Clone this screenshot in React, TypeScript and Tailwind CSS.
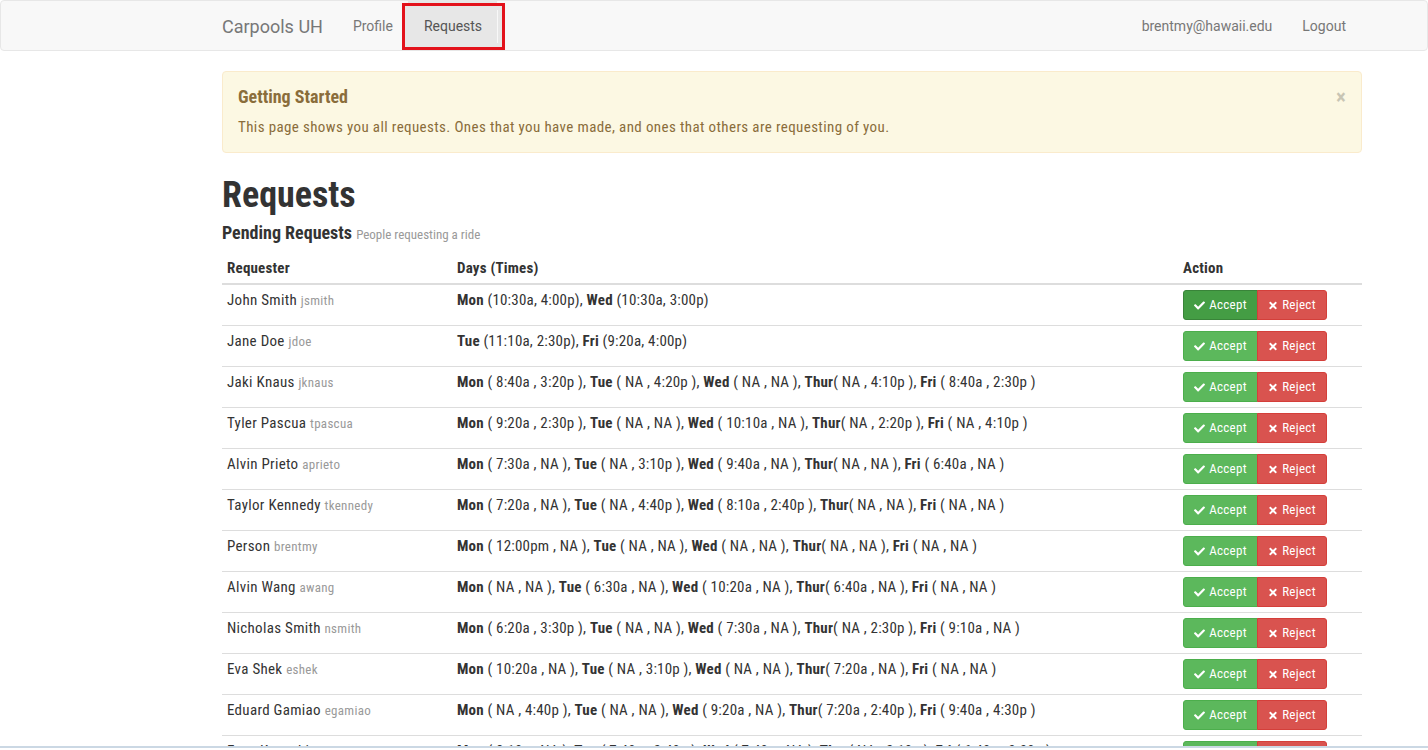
import React from "react";
import { FaCheck, FaTimes } from "react-icons/fa";

const cond = { fontFamily: '"Roboto Condensed", "Liberation Sans Narrow", Roboto, sans-serif' };
const rob = { fontFamily: 'Roboto, "Liberation Sans", sans-serif' };

type Req = { name: string; user: string; days: [string, string][] };

const rows: Req[] = [
  { name: "John Smith", user: "jsmith", days: [["Mon", " (10:30a, 4:00p), "], ["Wed", " (10:30a, 3:00p)"]] },
  { name: "Jane Doe", user: "jdoe", days: [["Tue", " (11:10a, 2:30p), "], ["Fri", " (9:20a, 4:00p)"]] },
  {
    name: "Jaki Knaus",
    user: "jknaus",
    days: [["Mon", " ( 8:40a , 3:20p ), "], ["Tue", " ( NA , 4:20p ), "], ["Wed", " ( NA , NA ), "], ["Thur", "( NA , 4:10p ), "], ["Fri", " ( 8:40a , 2:30p )"]],
  },
  {
    name: "Tyler Pascua",
    user: "tpascua",
    days: [["Mon", " ( 9:20a , 2:30p ), "], ["Tue", " ( NA , NA ), "], ["Wed", " ( 10:10a , NA ), "], ["Thur", "( NA , 2:20p ), "], ["Fri", " ( NA , 4:10p )"]],
  },
  {
    name: "Alvin Prieto",
    user: "aprieto",
    days: [["Mon", " ( 7:30a , NA ), "], ["Tue", " ( NA , 3:10p ), "], ["Wed", " ( 9:40a , NA ), "], ["Thur", "( NA , NA ), "], ["Fri", " ( 6:40a , NA )"]],
  },
  {
    name: "Taylor Kennedy",
    user: "tkennedy",
    days: [["Mon", " ( 7:20a , NA ), "], ["Tue", " ( NA , 4:40p ), "], ["Wed", " ( 8:10a , 2:40p ), "], ["Thur", "( NA , NA ), "], ["Fri", " ( NA , NA )"]],
  },
  {
    name: "Person",
    user: "brentmy",
    days: [["Mon", " ( 12:00pm , NA ), "], ["Tue", " ( NA , NA ), "], ["Wed", " ( NA , NA ), "], ["Thur", "( NA , NA ), "], ["Fri", " ( NA , NA )"]],
  },
  {
    name: "Alvin Wang",
    user: "awang",
    days: [["Mon", " ( NA , NA ), "], ["Tue", " ( 6:30a , NA ), "], ["Wed", " ( 10:20a , NA ), "], ["Thur", "( 6:40a , NA ), "], ["Fri", " ( NA , NA )"]],
  },
  {
    name: "Nicholas Smith",
    user: "nsmith",
    days: [["Mon", " ( 6:20a , 3:30p ), "], ["Tue", " ( NA , NA ), "], ["Wed", " ( 7:30a , NA ), "], ["Thur", "( NA , 2:30p ), "], ["Fri", " ( 9:10a , NA )"]],
  },
  {
    name: "Eva Shek",
    user: "eshek",
    days: [["Mon", " ( 10:20a , NA ), "], ["Tue", " ( NA , 3:10p ), "], ["Wed", " ( NA , NA ), "], ["Thur", "( 7:20a , NA ), "], ["Fri", " ( NA , NA )"]],
  },
  {
    name: "Eduard Gamiao",
    user: "egamiao",
    days: [["Mon", " ( NA , 4:40p ), "], ["Tue", " ( NA , NA ), "], ["Wed", " ( 9:20a , NA ), "], ["Thur", "( 7:20a , 2:40p ), "], ["Fri", " ( 9:40a , 4:30p )"]],
  },
  {
    name: "Evan Kaneshiro",
    user: "ekaneshi",
    days: [["Mon", " ( 8:10a , NA ), "], ["Tue", " ( 7:40a , 2:40p ), "], ["Wed", " ( 7:40a , NA ), "], ["Thur", "( NA , 2:10p ), "], ["Fri", " ( 6:40a , 3:30p )"]],
  },
];

function Actions({ first }: { first: boolean }) {
  return (
    <div className="flex text-[13px] tracking-[0.3px] text-white" style={cond}>
      <button
        className={`flex h-[30px] w-[75px] items-center justify-center gap-[4px] rounded-l-[3px] border ${
          first ? "border-[#398439] bg-[#449d44]" : "border-[#4cae4c] bg-[#5cb85c]"
        }`}
      >
        <FaCheck className="h-[11px] w-[11px]" />
        Accept
      </button>
      <button className="-ml-px flex h-[30px] w-[70px] items-center justify-center gap-[4px] rounded-r-[3px] border border-[#d43f3a] bg-[#d9534f]">
        <FaTimes className="h-[11px] w-[10px]" />
        Reject
      </button>
    </div>
  );
}

export default function App() {
  return (
    <div className="h-[750px] overflow-hidden bg-white text-[15px] tracking-[0.2px] text-[#333]">
      <div className="h-[748px] overflow-hidden border-b-2 border-[#cbd8e4]">
        {/* navbar */}
        <nav className="relative h-[51px] rounded-[4px] border border-[#e7e7e7] bg-[#f8f8f8] text-[14px] tracking-normal" style={rob}>
          <div className="ml-[206px] flex h-[50px] w-[1154px] items-stretch">
            <a className="flex items-center px-[15px] text-[18px] text-[#777]">Carpools UH</a>
            <a className="flex items-center px-[15px] text-[#777]">Profile</a>
            <div className="relative flex">
              <a className="flex items-center bg-[#e7e7e7] pr-[15px] pl-[16px] text-[#555]">Requests</a>
              <div className="absolute -left-[6px] -right-[8px] top-[2px] bottom-[1px] border-[3px] border-[#e3121b] shadow-[inset_0_0_0_4px_#e7e7e7]" />
            </div>
            <div className="flex-1" />
            <a className="flex items-center px-[15px] text-[#777]">brentmy@hawaii.edu</a>
            <a className="flex items-center px-[15px] text-[#777]">Logout</a>
          </div>
        </nav>

        <main className="ml-[222px] w-[1140px]" style={cond}>
          <div className="mt-[20px] flex rounded-[4px] border border-[#faebcc] bg-[#fcf8e3] px-[15px] pt-[15px] pb-[15px] text-[#8a6d3b]">
            <div className="flex-1">
              <h4 className="text-[18px] leading-[20px] font-bold tracking-normal">Getting Started</h4>
              <p className="mt-[10px] text-[15px] leading-[20px] tracking-[0.38px]">
                This page shows you all requests. Ones that you have made, and ones that others are requesting of you.
              </p>
            </div>
            <span className="mt-0 mr-0 text-[21px] leading-[20px] font-bold text-[#000] opacity-20">×</span>
          </div>

          <h1 className="mt-[22px] text-[36px] leading-[40px] font-bold tracking-normal">Requests</h1>
          <h4 className="mt-[8px] text-[18px] leading-[20px] font-bold tracking-normal">
            Pending Requests <small className="text-[13px] font-normal text-[#999]">People requesting a ride</small>
          </h4>

          <table className="mt-[8px] w-full border-collapse">
            <thead>
              <tr className="border-b-2 border-[#ddd] text-left">
                <th className="w-[230px] p-[5px] leading-[20px] font-bold">Requester</th>
                <th className="p-[5px] leading-[20px] font-bold">Days (Times)</th>
                <th className="w-[184px] p-[5px] leading-[20px] font-bold">Action</th>
              </tr>
            </thead>
            <tbody>
              {rows.map((r, i) => (
                <tr key={r.user} className="border-t border-[#ddd] align-top">
                  <td className="p-[5px] leading-[20px] tracking-[0.3px]">
                    {r.name} <small className="text-[13px] text-[#999]">{r.user}</small>
                  </td>
                  <td className="p-[5px] leading-[20px]">
                    {r.days.map(([d, t]) => (
                      <React.Fragment key={d}>
                        <b>{d}</b>
                        {t}
                      </React.Fragment>
                    ))}
                  </td>
                  <td className="p-[5px]">
                    <Actions first={i === 0} />
                  </td>
                </tr>
              ))}
            </tbody>
          </table>
        </main>
      </div>
    </div>
  );
}
